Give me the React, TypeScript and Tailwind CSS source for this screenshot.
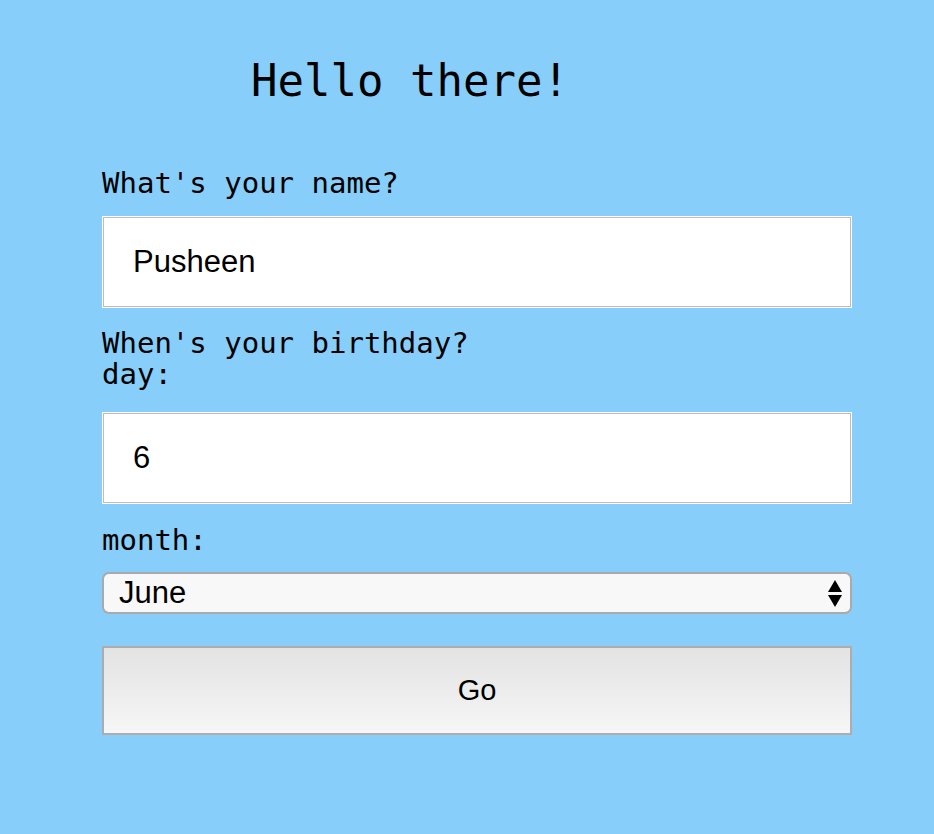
import React from "react";

export default function App() {
  const mono = { fontFamily: '"DejaVu Sans Mono", "Liberation Mono", monospace' };
  const sans = { fontFamily: '"Liberation Sans", Arial, sans-serif' };
  return (
    <div className="min-h-[834px] w-full bg-[#87cefa] text-black">
      <div className="ml-[102px] w-[750px] pt-[55px]" style={mono}>
        <h1 className="ml-[149px] text-[44px] leading-[52px] font-normal">Hello there!</h1>
        <form className="flex flex-col" onSubmit={(e) => e.preventDefault()}>
          <label className="mt-[61px] text-[29px] leading-[31px]">What&apos;s your name?</label>
          <input
            defaultValue="Pusheen"
            className="mt-[17px] h-[92px] w-[750px] border border-white bg-white pl-[30px] text-[31px] text-black shadow-[inset_0_0_0_1px_#bdbdbd] outline-none"
            style={sans}
          />
          <div className="mt-[20px] text-[29px] leading-[31px]">
            <div>When&apos;s your birthday?</div>
            <div>day:</div>
          </div>
          <input
            defaultValue="6"
            className="mt-[22px] h-[92px] w-[750px] border border-white bg-white pl-[30px] text-[31px] text-black shadow-[inset_0_0_0_1px_#bdbdbd] outline-none"
            style={sans}
          />
          <label className="mt-[21px] text-[29px] leading-[31px]">month:</label>
          <div className="relative mt-[16px] h-[42px] w-[750px]">
            <select
              defaultValue="June"
              className="h-[42px] w-[750px] appearance-none rounded-[7px] border-2 border-[#aaaaaa] bg-[#f8f8f8] pl-[15px] text-[31px] leading-[38px] text-black outline-none"
              style={sans}
            >
              {["January","February","March","April","May","June","July","August","September","October","November","December"].map((m) => (
                <option key={m} value={m}>{m}</option>
              ))}
            </select>
            <svg className="pointer-events-none absolute left-[726px] top-[8px]" width="14" height="27" viewBox="0 0 14 27">
              <polygon points="7,0 14,12 0,12" fill="#000" />
              <polygon points="0,15 14,15 7,27" fill="#000" />
            </svg>
          </div>
          <button
            type="submit"
            className="mt-[32px] h-[89px] w-[750px] border-2 border-[#adadad] bg-gradient-to-b from-[#e3e3e3] to-[#f6f6f6] text-[29px] text-black"
            style={sans}
          >
            Go
          </button>
        </form>
      </div>
    </div>
  );
}
